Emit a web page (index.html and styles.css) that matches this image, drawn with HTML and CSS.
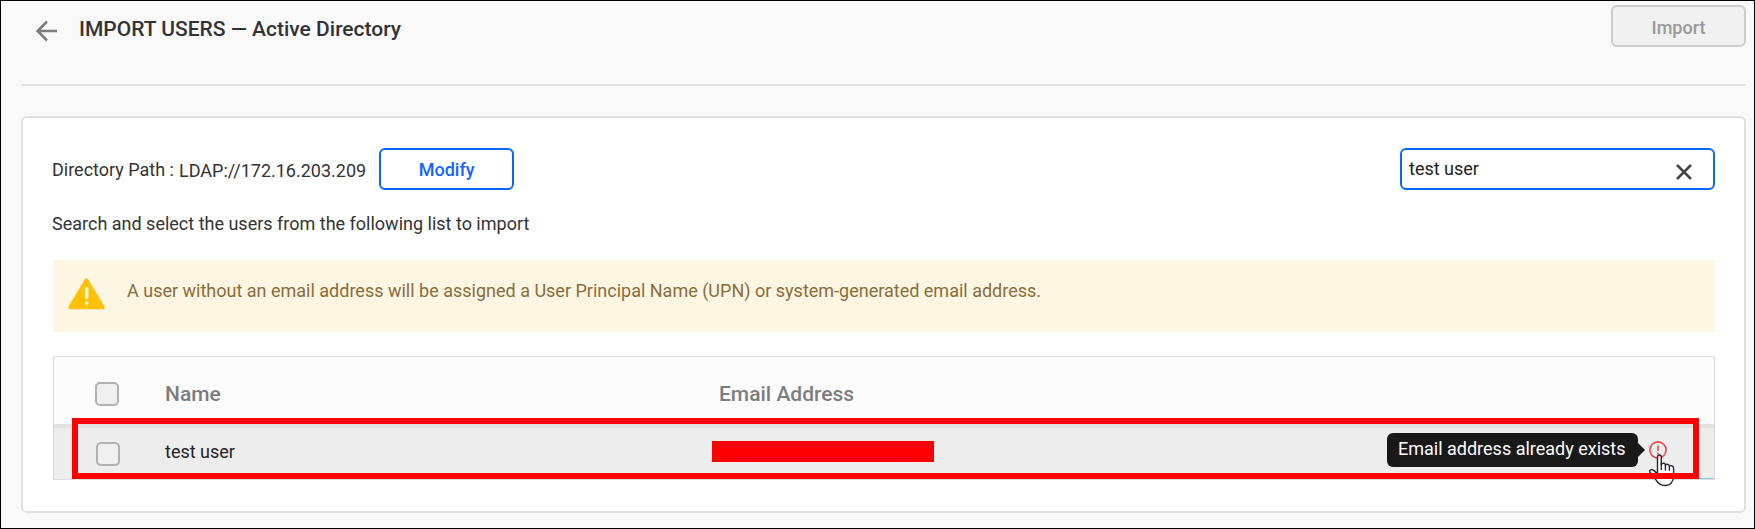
FILE: index.html
```html
<!DOCTYPE html>
<html lang="en">
<head>
<meta charset="utf-8">
<title>Import Users</title>
<link rel="stylesheet" href="styles.css">
</head>
<body>
<div class="page">
  <header class="header">
    <svg class="back" viewBox="0 0 22 22"><path d="M21 11H2M11 1.5L1.6 11L11 20.5"/></svg>
    <h1 class="title">IMPORT USERS — Active Directory</h1>
    <button class="btn btn-disabled">Import</button>
  </header>
  <main class="card">
    <div class="toolbar">
      <span class="path-label">Directory Path :</span>
      <span class="path-value">LDAP://172.16.203.209</span>
      <button class="btn btn-outline">Modify</button>
      <div class="search">
        <span class="search-text">test user</span>
        <svg class="clear" viewBox="0 0 16 16"><path d="M1 1L15 15M15 1L1 15"/></svg>
      </div>
    </div>
    <p class="hint">Search and select the users from the following list to import</p>
    <div class="alert">
      <svg class="warn" viewBox="0 0 37 32"><path class="warn-body" d="M18.5 2L35 29.5H2Z"/><path class="warn-mark" d="M18.7 10.5V19.5M18.7 25V25.2"/></svg>
      <span class="alert-text">A user without an email address will be assigned a User Principal Name (UPN) or system-generated email address.</span>
    </div>
    <div class="table">
      <div class="row row-head">
        <span class="check check-head"></span>
        <span class="th th-name">Name</span>
        <span class="th th-email">Email Address</span>
      </div>
      <div class="row row-body">
        <span class="check check-row"></span>
        <span class="td">test user</span>
        <span class="redacted"></span>
        <span class="status">
          <svg class="error" viewBox="0 0 18 18"><circle cx="9" cy="9" r="8.1"/><path d="M9 4.5V9.7M9 11.8V13.6"/></svg>
        </span>
      </div>
      <div class="tooltip">Email address already exists</div>
      <svg class="cursor" viewBox="0 0 26 33"><path d="M8.5 21V3.2Q8.5 1 10.4 1T12.3 3.2V10Q15.8 8.2 16.4 10.8Q19.6 9.4 20.2 11.8Q24.6 11 24.6 14.8V22Q24.2 31.3 15.8 31.5Q10.2 31.5 6.6 25.4L1 18.3Q0 15.7 3 15.8Q5.2 16 8.5 20.3"/><path d="M12.3 9V16M16.4 10.8V16.4M20.4 12V16.8"/></svg>
      <div class="highlight"></div>
    </div>
  </main>
</div>
</body>
</html>
```
FILE: styles.css
```css
* { box-sizing: border-box; }
body { margin: 0; font-family: Roboto, "Liberation Sans", sans-serif; font-size: 18px; line-height: 22px; color: #333; }
svg { display: block; fill: none; flex: none; }
.page { width: 1755px; height: 529px; border: 1px solid #000; background: #f9f9f9; padding: 0 8px 0 20px; overflow: hidden; }
.header { height: 85px; border-bottom: 2px solid #e1e3e4; display: flex; align-items: flex-start; padding-top: 4px; }
.back { width: 22px; height: 22px; margin: 15px 0 0 15px; stroke: #7d7d7d; stroke-width: 2.5; }
.title { margin: 12px 0 0 21px; font-size: 21px; line-height: 24px; font-weight: 500; white-space: nowrap; }
.btn { width: 135px; height: 42px; padding: 2px 0 0; border: 2px solid; border-radius: 6px; font: 500 18px/22px Roboto, sans-serif; flex: none; }
.btn-disabled { margin-left: auto; padding-top: 3px; color: #999; background: #f1f1f1; border-color: #ccc; }
.btn-outline { margin-left: 13px; color: #1463ff; background: #fff; border-color: #0b66ff; }
.card { margin-top: 30px; height: 397px; border: 2px solid #dde1e5; border-radius: 6px; background: #fff; padding: 30px 29px 0 30px; }
.toolbar { display: flex; align-items: center; height: 42px; white-space: nowrap; }
.path-label { margin: 2px 0 0 -1px; }
.path-value { margin: 4px 0 0 5px; }
.search { margin-left: auto; width: 315px; height: 42px; border: 2px solid #0b66ff; border-radius: 6px; background: #fff; display: flex; align-items: center; justify-content: space-between; padding: 0 21px 0 7px; color: #222; }
.clear { width: 16px; height: 16px; margin-top: 5px; stroke: #444; stroke-width: 2.5; }
.hint { margin: 23px 0 0 -1px; }
.alert { margin-top: 25px; height: 72px; background: #fdf6e2; color: #8a6d3b; display: flex; align-items: flex-start; padding: 18px 0 0 15px; white-space: nowrap; }
.warn { width: 37px; height: 32px; }
.warn-body { fill: #ffc107; stroke: #ffc107; stroke-width: 3.5; stroke-linejoin: round; }
.warn-mark { stroke: #fff8dc; stroke-width: 3.4; stroke-linecap: round; }
.alert-text { margin: 2px 0 0 22px; }
.table { position: relative; margin-top: 24px; height: 124px; border: 1px solid #ddd; background: #fcfcfc; }
.row { display: grid; grid-template-columns: 111px 547px 1fr 66px; }
.row-head { height: 71px; border-bottom: 4px solid #e1e1e1; }
.row-body { height: 51px; background: linear-gradient(#8cc9ec, #8cc9ec) right bottom / 16px 1px no-repeat #ededed; }
.check { width: 24px; height: 24px; border: 2px solid #b1b1b1; border-radius: 5px; background: #f0f0f0; }
.check-head { margin: 25px 0 0 41px; }
.check-row { margin: 14px 0 0 42px; }
.th { font-size: 21px; line-height: 24px; font-weight: 500; color: #7d7d7d; padding-top: 25px; }
.th-email { padding-left: 7px; }
.td { padding-top: 13px; color: #222; }
.redacted { width: 222px; height: 21px; margin-top: 13px; background: #f00; }
.status { padding: 13px 0 0 1px; }
.error { width: 18px; height: 18px; stroke: #f04444; stroke-width: 1.6; }
.highlight { position: absolute; left: 18px; top: 61px; width: 1627px; height: 61px; border: 6px solid #f00; }
.tooltip { position: absolute; left: 1333px; top: 76px; width: 251px; height: 34px; border-radius: 6px; background: #191919; color: #fff; padding: 5px 0 0 11px; white-space: nowrap; }
.tooltip::after { content: ""; position: absolute; left: 250px; top: 9px; border: 8px solid transparent; border-left: 8px solid #191919; border-right: 0; }
.cursor { position: absolute; left: 1595px; top: 97px; width: 26px; height: 33px; fill: #fff; stroke: #272735; stroke-width: 1.4; }
```
